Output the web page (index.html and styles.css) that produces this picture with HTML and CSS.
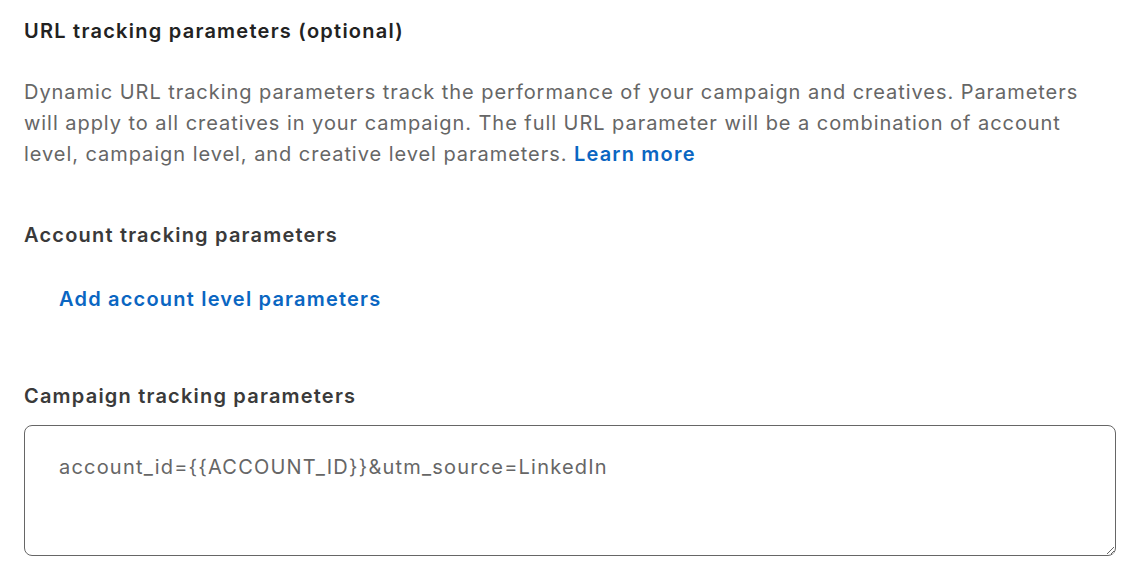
FILE: index.html
```html
<!DOCTYPE html>
<html>
<head>
    <meta charset="utf-8" />
    <title>URL tracking parameters</title>
    <link rel="stylesheet" href="styles.css">
</head>
<body>
<div class="tracking">
    <h3 class="tracking_title">URL tracking parameters (optional)</h3>
    <p class="tracking_desc">
        Dynamic URL tracking parameters track the performance of your campaign and creatives. Parameters
        will apply to all creatives in your campaign. The full URL parameter will be a combination of account
        level, campaign level, and creative level parameters. <a href="javascript:;" class="link">Learn more</a>
    </p>

    <h4 class="tracking_label">Account tracking parameters</h4>
    <a href="javascript:;" class="link add_link">Add account level parameters</a>

    <h4 class="tracking_label campaign_label">Campaign tracking parameters</h4>
    <textarea class="tracking_input">account_id={{ACCOUNT_ID}}&amp;utm_source=LinkedIn</textarea>
</div>
</body>
</html>
```

FILE: styles.css
```css
body{margin: 0;background: #fff;font-family: Inter, "Liberation Sans", sans-serif;}
.tracking{padding: 17px 16px 0 24px;}
.tracking_title{margin: 0;font-size: 20px;font-weight: 600;line-height: 28px;color: #222;letter-spacing: 1.25px;}
.tracking_desc{width: 1070px;margin: 32px 0 0 0;font-size: 20px;line-height: 31px;color: #666;letter-spacing: 0.95px;}
.link{color: #0a66c2;font-weight: 600;text-decoration: none;letter-spacing: 1.2px;}
.tracking_label{margin: 0;font-size: 20px;font-weight: 600;line-height: 28px;color: #3a3a3a;letter-spacing: 1.2px;}
.tracking .tracking_label{margin-top: 51px;}
.add_link{display: block;margin: 36px 0 0 35px;font-size: 20px;line-height: 28px;}
.tracking .campaign_label{margin-top: 69px;}
.tracking_input{display: block;box-sizing: border-box;width: 1092px;height: 131px;margin-top: 15px;padding: 27px 34px;border: 1px solid #666;border-radius: 8px;font-family: inherit;font-size: 20px;line-height: 28px;color: #666;letter-spacing: 1.2px;resize: vertical;outline: none;}
```
